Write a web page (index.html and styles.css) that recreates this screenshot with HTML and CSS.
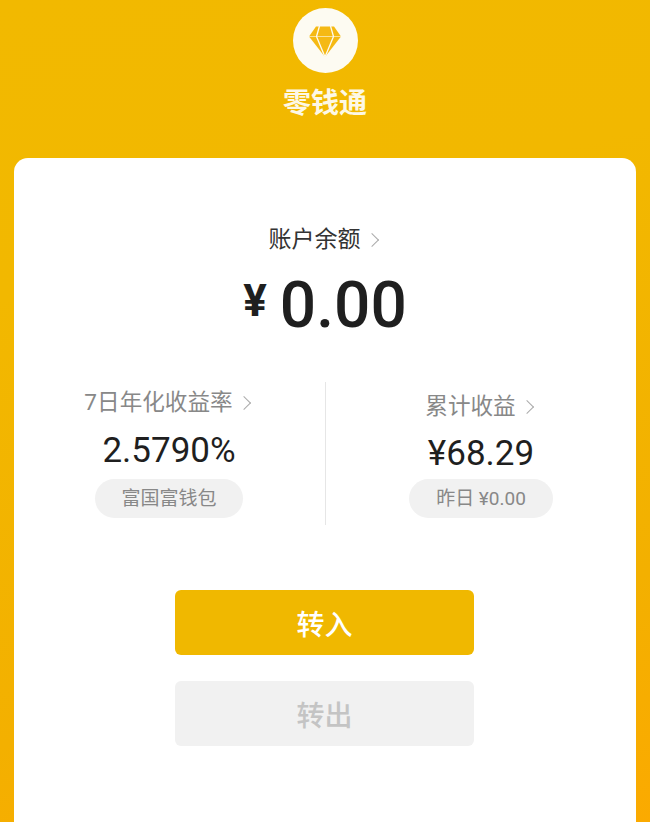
FILE: index.html
```html
<!DOCTYPE html>
<html lang="zh-CN">
<head>
    <meta charset="UTF-8">
    <meta name="viewport" content="width=device-width, initial-scale=1.0">
    <title>零钱通</title>
    <link rel="stylesheet" href="styles.css">
</head>
<body>

    <!-- 顶部 -->
    <div class="header">
        <div class="logo">
            <svg class="gem-icon" width="32" height="31" viewBox="0 0 32 31">
                <path class="gem" d="M7 0.5H25L32 10.5L16 31L0 10.5Z"/>
                <path class="gem-line" d="M10.5 0L7.5 10.5L16 31L24.5 10.5L21.5 0"/>
                <path class="gem-line-thin" d="M0 10.5H32"/>
            </svg>
        </div>
        <div class="title">零钱通</div>
    </div>

    <div class="card">
        <!-- 账户余额 -->
        <div class="balance">
            <div class="balance-label">账户余额<span class="arrow"></span></div>
            <div class="balance-value"><span class="yen">¥</span>0.00</div>
        </div>

        <div class="stats">
            <div class="stat stat-left">
                <div class="stat-label">7日年化收益率<span class="arrow"></span></div>
                <div class="stat-value stat-value-left">2.5790%</div>
                <div class="pill pill-left">富国富钱包</div>
            </div>
            <div class="stat stat-right">
                <div class="stat-label">累计收益<span class="arrow"></span></div>
                <div class="stat-value stat-value-right">¥68.29</div>
                <div class="pill pill-right">昨日 ¥0.00</div>
            </div>
        </div>

        <div class="actions">
            <button class="btn btn-in">转入</button>
            <button class="btn btn-out">转出</button>
        </div>
    </div>

</body>
</html>
```

FILE: styles.css
```css
* {
    margin: 0;
    padding: 0;
    box-sizing: border-box;
}

html, body {
    height: 822px;
    overflow: hidden;
}

body {
    background: linear-gradient(165deg, #f2b900 0%, #f2b800 30%, #f3b000 75%, #fbaa00 100%);
    font-family: "Roboto", "Noto Sans CJK SC", sans-serif;
}

/* 顶部 */
.header {
    height: 158px;
    padding-top: 8px;
    display: flex;
    flex-direction: column;
    align-items: center;
}

.logo {
    width: 65px;
    height: 65px;
    border-radius: 50%;
    background-color: #fdfbf2;
    display: flex;
    justify-content: center;
    align-items: center;
}

.gem-icon {
    margin-top: 2px;
}

.gem {
    fill: #f5b914;
}

.gem-line {
    fill: none;
    stroke: #fdfbf2;
    stroke-width: 1.3;
}

.gem-line-thin {
    fill: none;
    stroke: #fdfbf2;
    stroke-width: 0.6;
}

.title {
    margin-top: 12px;
    font-size: 28px;
    line-height: 38px;
    font-weight: 700;
    color: #fdf8e6;
}

/* 白色卡片 */
.card {
    margin: 0 14px;
    height: 664px;
    background-color: #fff;
    border-radius: 14px 14px 0 0;
    padding-top: 66px;
}

.balance {
    text-align: center;
}

.balance-label {
    font-size: 23px;
    line-height: 32px;
    color: #333;
}

.balance-value {
    margin-top: 12px;
    font-size: 64px;
    line-height: 76px;
    font-weight: 500;
    color: #1f1f1f;
}

.yen {
    font-size: 44px;
    font-weight: 700;
    margin-right: 13px;
    position: relative;
    top: -11px;
}

.arrow {
    display: inline-block;
    width: 10px;
    height: 10px;
    margin-left: 6px;
    margin-right: 5px;
    border-top: 1.5px solid #aaa;
    border-right: 1.5px solid #aaa;
    transform: rotate(45deg);
    position: relative;
    top: -2px;
}

/* 收益 */
.stats {
    margin-top: 32px;
    height: 143px;
    display: grid;
    grid-template-columns: 1fr 1fr;
}

.stat {
    display: flex;
    flex-direction: column;
    align-items: center;
    padding-bottom: 7px;
    justify-content: flex-end;
}

.stat-left {
    padding-right: 1px;
}

.stat-right {
    border-left: 1px solid #e6e6e6;
}

.stat-label {
    font-size: 22.6px;
    line-height: 32px;
    color: #888;
}

.stat-value {
    font-size: 35px;
    line-height: 44px;
    color: #1f1f1f;
}

.stat-value-left {
    margin-top: 10px;
    margin-bottom: 6px;
}

.stat-value-right {
    margin-top: 9px;
    margin-bottom: 3px;
}

.pill {
    height: 39px;
    line-height: 39px;
    border-radius: 20px;
    background-color: #f1f1f1;
    color: #888;
    font-size: 19px;
    text-align: center;
}

.pill-left {
    width: 148px;
}

.pill-right {
    width: 144px;
}

/* 按钮 */
.actions {
    margin-top: 65px;
    padding-right: 1px;
    display: flex;
    flex-direction: column;
    align-items: center;
    gap: 26px;
}

.btn {
    width: 299px;
    height: 65px;
    border: none;
    border-radius: 6px;
    font-family: inherit;
    font-size: 28px;
    font-weight: 500;
}

.btn-in {
    background-color: #f0b800;
    color: #fff;
}

.btn-out {
    background-color: #f1f1f1;
    color: #c4c4c4;
}
```
